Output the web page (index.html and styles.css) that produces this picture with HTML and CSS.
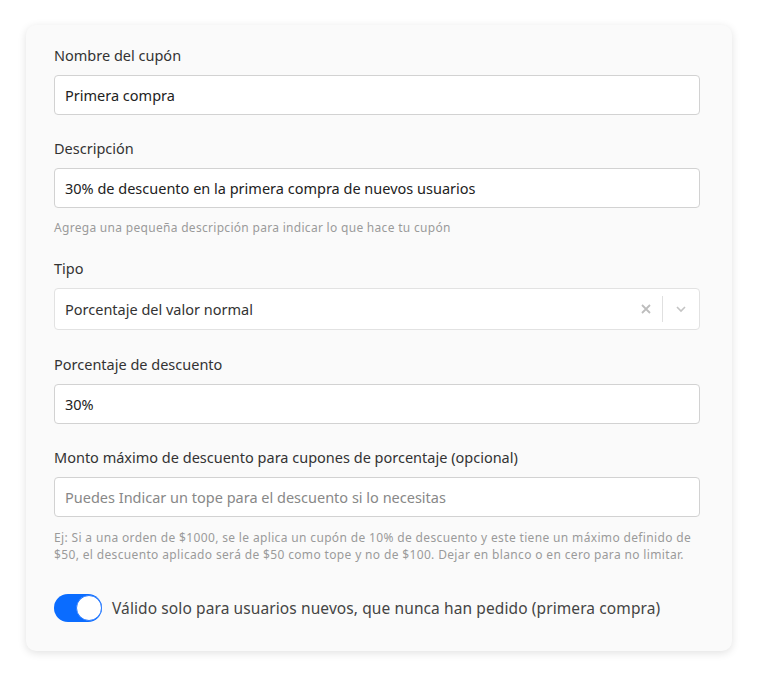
FILE: index.html
```html
<!DOCTYPE html>
<html lang="es">
<head>
  <meta charset="UTF-8">
  <meta name="viewport" content="width=device-width, initial-scale=1">
  <title>Cupón</title>
  <link rel="stylesheet" href="styles.css">
</head>
<body>

  <div class="card">
    <div class="field">
      <label class="label">Nombre del cupón</label>
      <div class="input">Primera compra</div>
    </div>

    <div class="field">
      <label class="label">Descripción</label>
      <div class="input">30% de descuento en la primera compra de nuevos usuarios</div>
      <p class="help">Agrega una pequeña descripción para indicar lo que hace tu cupón</p>
    </div>

    <div class="field field-select">
      <label class="label">Tipo</label>
      <div class="select">
        <span class="select-value">Porcentaje del valor normal</span>
        <span class="select-clear">
          <svg width="12" height="12" viewBox="0 0 12 12"><path d="M2 2L10 10M10 2L2 10" stroke="#bdbdbd" stroke-width="1.8" fill="none"/></svg>
        </span>
        <span class="select-sep"></span>
        <span class="select-arrow">
          <svg width="12" height="8" viewBox="0 0 12 8"><path d="M2 2L6 6L10 2" stroke="#c4c4c4" stroke-width="1.6" fill="none"/></svg>
        </span>
      </div>
    </div>

    <div class="field">
      <label class="label">Porcentaje de descuento</label>
      <div class="input">30%</div>
    </div>

    <div class="field">
      <label class="label">Monto máximo de descuento para cupones de porcentaje (opcional)</label>
      <div class="input placeholder">Puedes Indicar un tope para el descuento si lo necesitas</div>
      <p class="help help-long">Ej: Si a una orden de $1000, se le aplica un cupón de 10% de descuento y este tiene un máximo definido de $50, el descuento aplicado será de $50 como tope y no de $100. Dejar en blanco o en cero para no limitar.</p>
    </div>

    <div class="toggle-row">
      <span class="toggle"><span class="knob"></span></span>
      <span class="toggle-text">Válido solo para usuarios nuevos, que nunca han pedido (primera compra)</span>
    </div>
  </div>

</body>
</html>
```

FILE: styles.css
```css
body {
  margin: 0;
  padding: 25px 28px 28px 26px;
  background: #fff;
  font-family: "Noto Sans", Arial, sans-serif;
  color: #333;
}
.card {
  background: #fafafa;
  border-radius: 10px;
  box-shadow: 0 2px 8px rgba(0,0,0,0.12);
  padding: 20px 32px 29px 28px;
  display: flex;
  flex-direction: column;
  gap: 23px;
}
.field { display: flex; flex-direction: column; }
.field-select { margin-bottom: 1px; }
.label {
  font-size: 14.5px;
  line-height: 20px;
  margin-bottom: 10px;
  color: #333;
}
.input {
  height: 38px;
  line-height: 38px;
  padding: 0 10px;
  background: #fff;
  border: 1px solid #d2d2d2;
  border-radius: 4px;
  font-size: 14.5px;
  color: #222;
  white-space: nowrap;
  overflow: hidden;
}
.input.placeholder { color: #888; }
.help {
  margin: 11px 0 -1px;
  font-size: 12px;
  line-height: 17px;
  color: #9a9a9a;
  letter-spacing: 0.3px;
}
.help-long { margin: 12px 0 0; letter-spacing: 0.35px; }
.select {
  height: 40px;
  display: flex;
  align-items: center;
  background: #fff;
  border: 1px solid #e2e2e2;
  border-radius: 4px;
  font-size: 14.5px;
  color: #333;
}
.select-value { flex: 1; padding-left: 10px; }
.select-clear { display: flex; padding: 0 10px; }
.select-sep { width: 1px; height: 26px; background: #e0e0e0; }
.select-arrow { display: flex; padding: 0 12px 0 12px; }
.toggle-row {
  display: flex;
  align-items: center;
  gap: 10px;
  margin-top: 8px;
}
.toggle {
  width: 48px;
  height: 28px;
  border-radius: 14px;
  background: #0a6cff;
  display: flex;
  justify-content: flex-end;
  align-items: center;
  box-sizing: border-box;
}
.knob {
  width: 26px;
  height: 26px;
  border-radius: 50%;
  background: #fff;
  border: 1px solid #2a7bff;
  box-sizing: border-box;
}
.toggle-text { font-size: 15.5px; letter-spacing: 0.1px; color: #444; }
```
